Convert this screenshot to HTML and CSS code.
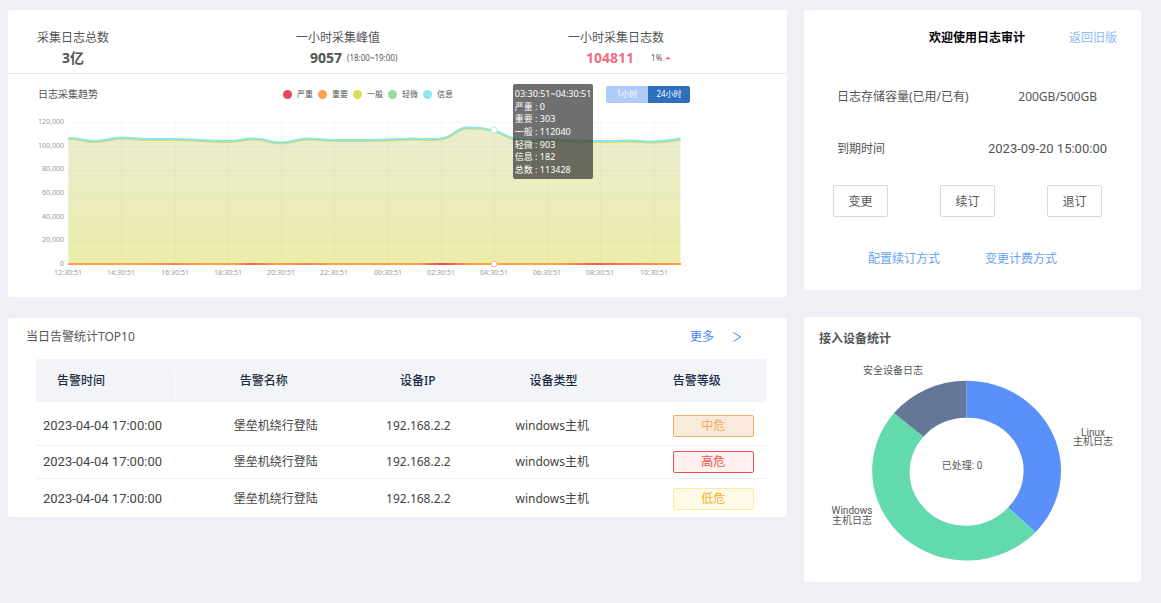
FILE: index.html
```html
<!DOCTYPE html>
<html lang="zh-CN">
<head>
<meta charset="utf-8">
<meta name="viewport" content="width=device-width, initial-scale=1">
<title>日志审计</title>
<link rel="stylesheet" href="styles.css">
</head>
<body>
<main class="dashboard">
  <div class="column column-main">
    <section class="card">
      <div class="stats">
        <div class="stat stat-total">
          <span class="stat-label">采集日志总数</span>
          <strong class="stat-value">3亿</strong>
        </div>
        <div class="stat stat-peak">
          <span class="stat-label">一小时采集峰值</span>
          <span class="stat-line"><strong class="stat-value">9057</strong><small class="stat-note">(18:00~19:00)</small></span>
        </div>
        <div class="stat stat-hour">
          <span class="stat-label">一小时采集日志数</span>
          <span class="stat-line stat-line-wide"><strong class="stat-value stat-value-up">104811</strong><small class="stat-trend">1%<svg class="trend-icon" viewBox="0 0 8 4" aria-hidden="true"><path d="M0 3.2Q2 2.8 4 .4Q6 2.8 8 3.2Z"/></svg></small></span>
        </div>
      </div>
      <div class="trend-head">
        <h2 class="trend-title">日志采集趋势</h2>
        <ul class="legend">
          <li class="legend-item legend-critical">严重</li>
          <li class="legend-item legend-major">重要</li>
          <li class="legend-item legend-normal">一般</li>
          <li class="legend-item legend-minor">轻微</li>
          <li class="legend-item legend-info">信息</li>
        </ul>
        <div class="range">
          <button type="button" class="range-button">1小时</button>
          <button type="button" class="range-button range-active">24小时</button>
        </div>
      </div>
      <div class="trend">
        <svg class="trend-chart" viewBox="0 0 779 187" role="img" aria-label="日志采集趋势">
          <defs>
            <linearGradient id="area" x1="0" y1="0" x2="0" y2="1">
              <stop offset="0" stop-color="#ebecd0"/>
              <stop offset="1" stop-color="#ecedaa"/>
            </linearGradient>
            <linearGradient id="peaks" gradientUnits="userSpaceOnUse" x1="60" y1="0" x2="673" y2="0">
              <stop offset="0" stop-color="#ff9f4a"/>
              <stop offset=".13" stop-color="#ff9f4a"/>
              <stop offset=".17" stop-color="#fb7f4c"/>
              <stop offset=".22" stop-color="#ff9f4a"/>
              <stop offset=".27" stop-color="#ff9f4a"/>
              <stop offset=".3" stop-color="#f5604e"/>
              <stop offset=".34" stop-color="#ff9f4a"/>
              <stop offset=".39" stop-color="#fb7f4c"/>
              <stop offset=".43" stop-color="#ff9f4a"/>
              <stop offset=".57" stop-color="#ff9f4a"/>
              <stop offset=".61" stop-color="#ee4454"/>
              <stop offset=".66" stop-color="#ff9f4a"/>
              <stop offset=".8" stop-color="#ff9f4a"/>
              <stop offset=".86" stop-color="#f5604e"/>
              <stop offset=".95" stop-color="#fb8a4c"/>
              <stop offset="1" stop-color="#ff9f4a"/>
            </linearGradient>
          </defs>
          <path fill="url(#area)" d="M60.500 28C74 28 74 31 87 31S101 27.500 114 27.500S127 29 140 29S154 29 167 29S207 31 220 31S233 28.500 246 28.500S260 32.500 273 32.500S287 28.500 300 28.500S313 30 326 30S366 30 379 29.500S393 28.500 406 28.500S420 30 433 28.500S448 17.500 459 17.500S474 17.500 486 20.500S501 30 515 30S526 29.500 539 29.500S566 31 592 31S606 30.500 619 30.500S632 31.500 645 31.500S660 30 672.500 28.500V154H60.500Z"/>
          <g class="grid-lines">
            <path d="M60.500 12.500H672.500M60.500 36.500H672.500M60.500 60.500H672.500M60.500 83.500H672.500M60.500 107.500H672.500M60.500 130.500H672.500"/>
            <path d="M60.500 12V154M113.500 12V154M167.500 12V154M220.500 12V154M273.500 12V154M326.500 12V154M380.500 12V154M433.500 12V154M486.500 12V154M539.500 12V154M592.500 12V154M646.500 12V154"/>
          </g>
          <path class="line-normal" d="M60.500 29C74 29 74 32 87 32S101 28.500 114 28.500S127 30 140 30S154 30 167 30S207 32 220 32S233 29.500 246 29.500S260 33.500 273 33.500S287 29.500 300 29.500S313 31 326 31S366 31 379 30.500S393 29.500 406 29.500S420 31 433 29.500S448 18.500 459 18.500S474 18.500 486 21.500S501 31 515 31S526 30.500 539 30.500S566 32 592 32S606 31.500 619 31.500S632 32.500 645 32.500S660 31 672.500 29.500"/>
          <path class="line-info" d="M60.500 28C74 28 74 31 87 31S101 27.500 114 27.500S127 29 140 29S154 29 167 29S207 31 220 31S233 28.500 246 28.500S260 32.500 273 32.500S287 28.500 300 28.500S313 30 326 30S366 30 379 29.500S393 28.500 406 28.500S420 30 433 28.500S448 17.500 459 17.500S474 17.500 486 20.500S501 30 515 30S526 29.500 539 29.500S566 31 592 31S606 30.500 619 30.500S632 31.500 645 31.500S660 30 672.500 28.500"/>
          <rect x="60" y="153" width="613" height="2" fill="url(#peaks)"/>
          <circle class="dot dot-info" cx="486" cy="20" r="3"/>
          <circle class="dot dot-major" cx="486" cy="154" r="3"/>
          <g class="axis axis-y">
            <text x="56" y="14">120,000</text>
            <text x="56" y="38">100,000</text>
            <text x="56" y="61">80,000</text>
            <text x="56" y="85">60,000</text>
            <text x="56" y="109">40,000</text>
            <text x="56" y="132">20,000</text>
            <text x="56" y="156">0</text>
          </g>
          <g class="axis axis-x">
            <text x="60" y="165">12:30:51</text>
            <text x="113" y="165">14:30:51</text>
            <text x="167" y="165">16:30:51</text>
            <text x="220" y="165">18:30:51</text>
            <text x="273" y="165">20:30:51</text>
            <text x="326" y="165">22:30:51</text>
            <text x="380" y="165">00:30:51</text>
            <text x="433" y="165">02:30:51</text>
            <text x="486" y="165">04:30:51</text>
            <text x="539" y="165">06:30:51</text>
            <text x="592" y="165">08:30:51</text>
            <text x="646" y="165">10:30:51</text>
          </g>
        </svg>
        <div class="tooltip">
          <span>03:30:51~04:30:51</span>
          <span>严重 : 0</span>
          <span>重要 : 303</span>
          <span>一般 : 112040</span>
          <span>轻微 : 903</span>
          <span>信息 : 182</span>
          <span>总数 : 113428</span>
        </div>
      </div>
    </section>

    <section class="card">
      <div class="alerts-head">
        <h2 class="alerts-title">当日告警统计TOP10</h2>
        <a class="more" href="#">更多<svg class="more-icon" viewBox="0 0 8 10" aria-hidden="true"><path d="M.5.5L7.500 5L.5 9.500"/></svg></a>
      </div>
      <div class="alerts-body">
        <table class="alerts">
          <colgroup><col class="col-time"><col class="col-name"><col class="col-ip"><col class="col-type"><col></colgroup>
          <thead>
            <tr>
              <th class="cell-time" scope="col">告警时间</th>
              <th class="cell-name" scope="col">告警名称</th>
              <th scope="col">设备IP</th>
              <th class="cell-type" scope="col">设备类型</th>
              <th class="cell-level" scope="col">告警等级</th>
            </tr>
          </thead>
          <tbody>
            <tr class="row-first">
              <td class="cell-time">2023-04-04 17:00:00</td>
              <td class="cell-name">堡垒机绕行登陆</td>
              <td>192.168.2.2</td>
              <td class="cell-type">windows主机</td>
              <td class="cell-level"><span class="tag tag-medium">中危</span></td>
            </tr>
            <tr class="row-middle">
              <td class="cell-time">2023-04-04 17:00:00</td>
              <td class="cell-name">堡垒机绕行登陆</td>
              <td>192.168.2.2</td>
              <td class="cell-type">windows主机</td>
              <td class="cell-level"><span class="tag tag-high">高危</span></td>
            </tr>
            <tr class="row-last">
              <td class="cell-time">2023-04-04 17:00:00</td>
              <td class="cell-name">堡垒机绕行登陆</td>
              <td>192.168.2.2</td>
              <td class="cell-type">windows主机</td>
              <td class="cell-level"><span class="tag tag-low">低危</span></td>
            </tr>
          </tbody>
        </table>
      </div>
    </section>
  </div>

  <div class="column column-side">
    <section class="card account">
      <div class="account-head">
        <h1 class="account-title">欢迎使用日志审计</h1>
        <a class="link-light" href="#">返回旧版</a>
      </div>
      <dl class="facts">
        <div class="fact fact-storage">
          <dt>日志存储容量(已用/已有)</dt>
          <dd>200GB/500GB</dd>
        </div>
        <div class="fact">
          <dt>到期时间</dt>
          <dd class="fact-date">2023-09-20 15:00:00</dd>
        </div>
      </dl>
      <div class="actions">
        <button type="button" class="action">变更</button>
        <button type="button" class="action">续订</button>
        <button type="button" class="action">退订</button>
      </div>
      <div class="links">
        <a class="link" href="#">配置续订方式</a>
        <a class="link" href="#">变更计费方式</a>
      </div>
    </section>

    <section class="card">
      <h2 class="devices-title">接入设备统计</h2>
      <svg class="donut" viewBox="0 0 337 227" role="img" aria-label="接入设备统计">
        <path fill="#5b8ff9" d="M162.500 25.700A94.500 90 0 0 1 231.500 177.200L204 152.500A55.500 53 0 0 0 162.500 62.700Z"/>
        <path fill="#62daab" d="M231.500 177.200A94.500 90 0 0 1 90 58L119.500 81.700A55.500 53 0 0 0 204 152.500Z"/>
        <path fill="#657798" d="M90 58A94.500 90 0 0 1 162.500 25.700V62.700A55.500 53 0 0 0 119.500 81.700Z"/>
        <g class="donut-labels">
          <text x="89" y="19">安全设备日志</text>
          <text x="289" y="81">Linux</text>
          <text x="289" y="90">主机日志</text>
          <text x="48" y="159">Windows</text>
          <text x="48" y="169">主机日志</text>
          <text x="158" y="114">已处理: 0</text>
        </g>
      </svg>
    </section>
  </div>
</main>
</body>
</html>
```
FILE: styles.css
```css
* {
  box-sizing: border-box;
}

body {
  margin: 0;
  background: #eff0f5;
  color: #555;
  font: 12px/18px "Noto Sans", "Noto Sans CJK SC", sans-serif;
}

h1, h2, ul, dl, dd {
  margin: 0;
  padding: 0;
}

h1, h2 {
  font-size: 12px;
  font-weight: 400;
}

a {
  text-decoration: none;
}

button {
  padding: 0;
  font-family: inherit;
  cursor: pointer;
}

.dashboard {
  display: grid;
  grid-template-columns: 779fr 337fr;
  gap: 17px;
  align-items: start;
  padding: 10px 20px 20px 8px;
}

.column {
  display: flex;
  flex-direction: column;
  min-width: 0;
}

.column-main {
  gap: 21px;
}

.column-side {
  gap: 27px;
}

.card {
  background: #fff;
  border-radius: 3px;
}

/* Collection totals */

.stats {
  display: grid;
  grid-template-columns: 259fr 272fr 190fr;
  padding: 19px 29px 5px;
  border-bottom: 1px solid #e9e9eb;
}

.stat {
  display: flex;
  flex-direction: column;
}

.stat-total {
  justify-self: start;
  align-items: center;
}

.stat-line {
  display: flex;
  align-items: center;
  gap: 5px;
  padding-left: 14px;
}

.stat-line-wide {
  gap: 17px;
  padding-left: 18px;
}

.stat-value {
  font-size: 14px;
  line-height: 21px;
}

.stat-value-up {
  color: #ee6e7f;
}

.stat-note,
.stat-trend {
  font-size: 8px;
}

.stat-trend {
  display: flex;
  align-items: center;
  gap: 2px;
}

.trend-icon {
  width: 8px;
  height: 4px;
  fill: #ee6e7f;
}

/* Trend chart */

.trend-head {
  display: grid;
  grid-template-columns: 245fr 323fr 84px;
  align-items: center;
  padding: 11px 97px 7px 30px;
}

.trend-title {
  font-size: 10px;
}

.legend {
  display: flex;
  gap: 5px;
  list-style: none;
  font-size: 8px;
}

.legend-item {
  display: flex;
  align-items: center;
  gap: 5px;
}

.legend-item::before {
  width: 9px;
  height: 9px;
  border-radius: 50%;
  background: currentColor;
  content: "";
}

.legend-critical::before { background: #ea4560; }
.legend-major::before { background: #fba24c; }
.legend-normal::before { background: #dade5a; }
.legend-minor::before { background: #98dda0; }
.legend-info::before { background: #8ee6ec; }

.range {
  display: grid;
  grid-template-columns: 1fr 1fr;
  overflow: hidden;
  border-radius: 2px;
}

.range-button {
  height: 17px;
  border: 0;
  background: #b0caf9;
  color: #fff;
  font-size: 8px;
  line-height: 16px;
}

.range-active {
  background: #2e70bd;
}

.trend {
  position: relative;
}

.trend-chart,
.donut {
  display: block;
  width: 100%;
  height: auto;
}

.grid-lines {
  fill: none;
  stroke: #80808a;
  stroke-opacity: .06;
}

.line-normal,
.line-info {
  fill: none;
  stroke: #d3dc6a;
  stroke-width: 2;
}

.line-info {
  stroke: #8ce6e4;
}

.dot {
  fill: #fff;
  stroke: #b9f0ee;
}

.dot-major {
  stroke: #ffb987;
}

.axis {
  fill: #999;
  font-size: 7px;
}

.axis-y {
  text-anchor: end;
}

.axis-x {
  text-anchor: middle;
}

.tooltip {
  position: absolute;
  top: -26px;
  left: 64.8%;
  display: grid;
  align-content: space-between;
  height: 95px;
  padding: 4px 2px 3px;
  border-radius: 2px;
  background: rgba(50, 50, 50, .7);
  color: #fff;
  font-size: 9px;
  line-height: 12px;
  white-space: nowrap;
}

/* Alerts */

.alerts-head {
  display: flex;
  align-items: center;
  justify-content: space-between;
  padding: 10px 46px 13px 18px;
}

.more {
  display: flex;
  align-items: center;
  gap: 19px;
  color: #4384fa;
}

.more-icon {
  width: 8px;
  height: 10px;
  fill: none;
  stroke: #4384fa;
}

.alerts-body {
  padding: 0 21px 0 28px;
}

.alerts {
  width: 100%;
  border-spacing: 0;
  table-layout: fixed;
  color: #444;
}

.col-time { width: 19%; }
.col-name { width: 28%; }
.col-ip { width: 18%; }
.col-type { width: 21%; }

.alerts th {
  height: 43px;
  padding: 0 0 0 21px;
  background: #f3f4f7;
  color: #1d2a45;
  font-weight: 500;
  text-align: left;
}

.alerts td {
  padding: 0 0 0 7px;
  border-bottom: 1px solid #eeeff2;
}

.alerts th.cell-time {
  background-image: linear-gradient(#fff, #fff);
  background-position: right bottom;
  background-repeat: no-repeat;
  background-size: 1px 33px;
}

.alerts th.cell-name {
  padding-left: 65px;
}

.alerts td.cell-name {
  padding-left: 59px;
}

.alerts th.cell-type {
  padding-left: 19px;
}

.alerts td.cell-type {
  padding-left: 5px;
}

.alerts .cell-level {
  padding-left: 9px;
}

.alerts td.cell-time,
.fact-date {
  font-family: Roboto, sans-serif;
  font-size: 13px;
}

.row-first { height: 44px; }
.row-middle { height: 33px; }
.row-last { height: 38px; }

.alerts .row-first td {
  padding-top: 5px;
}

.alerts .row-last td {
  padding-top: 2px;
  border-bottom: 0;
}

.tag {
  display: block;
  width: 81px;
  border: 1px solid;
  border-radius: 2px;
  line-height: 20px;
  text-align: center;
}

.tag-medium {
  border-color: #f6ac62;
  background: #faeadb;
  color: #f9a85a;
}

.tag-high {
  border-color: #f0504c;
  background: #ffefef;
  color: #f0504c;
}

.tag-low {
  border-color: #fde9a4;
  background: #fffae8;
  color: #f8b125;
}

/* Account */

.account {
  padding: 19px 24px 22px 29px;
}

.account-head {
  display: flex;
  justify-content: flex-end;
  gap: 44px;
}

.account-title {
  color: #000;
  font-weight: 700;
}

.link-light {
  color: #8bb7f8;
}

.facts {
  display: grid;
  gap: 34px;
  padding: 41px 10px 0 4px;
}

.fact {
  display: flex;
  justify-content: space-between;
}

.fact-storage {
  padding-right: 10px;
}

.actions {
  display: flex;
  justify-content: space-between;
  padding: 27px 15px 0 0;
}

.action {
  width: 55px;
  height: 32px;
  border: 1px solid #d9d9d9;
  border-radius: 2px;
  background: #fff;
  color: #555;
  font-size: 12px;
}

.links {
  display: flex;
  gap: 45px;
  padding: 33px 0 0 35px;
}

.link {
  color: #68a2f8;
}

/* Devices */

.devices-title {
  padding: 13px 15px 7px;
  font-weight: 700;
}

.donut-labels {
  fill: #555;
  font-family: Roboto, "Noto Sans CJK SC", sans-serif;
  font-size: 10px;
  text-anchor: middle;
}
```
